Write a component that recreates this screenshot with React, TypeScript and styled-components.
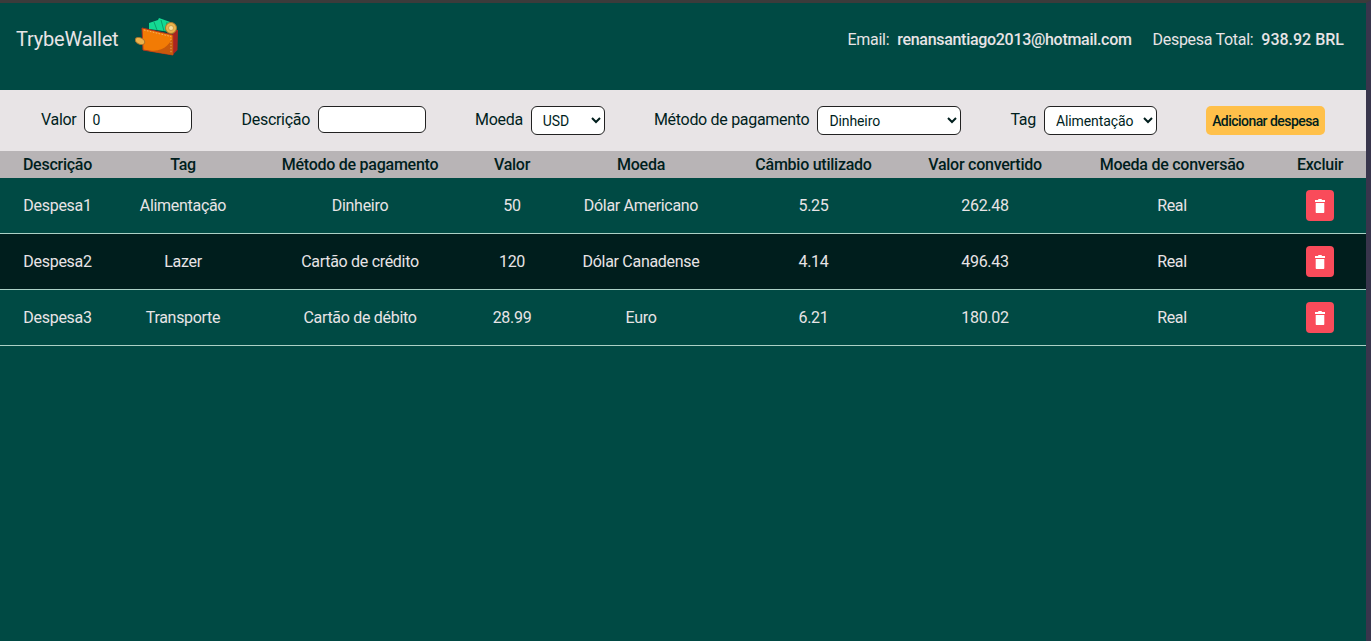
import React from 'react';
import styled, { createGlobalStyle } from 'styled-components';

const Global = createGlobalStyle`
  html, body { margin: 0; padding: 0; background: #004a44; }
  body { font-family: Roboto, "Noto Sans", sans-serif; overflow: hidden; }
`;

const Page = styled.div`
  width: 1371px;
  height: 641px;
  background: #004a44;
  border-top: 3px solid #3b3b3b;
  border-right: 5px solid #38354c;
  box-sizing: border-box;
  overflow: hidden;
`;

const Header = styled.header`
  height: 87px;
  display: flex;
  justify-content: space-between;
  align-items: flex-start;
  padding: 14px 22px 0 16px;
  box-sizing: border-box;
  color: #e8e4e6;
`;

const Brand = styled.div`
  display: flex;
  align-items: flex-start;
  gap: 17px;
`;

const BrandName = styled.span`
  font-size: 20px;
  line-height: 44px;
  letter-spacing: -0.2px;
`;

const Info = styled.div`
  display: flex;
  gap: 21px;
  padding-top: 13px;
  font-size: 16px;
  line-height: 20px;
  letter-spacing: -0.3px;
`;

const InfoItem = styled.span`
  display: flex;
  gap: 8px;
`;

const Strong = styled.strong<{ $plain?: boolean }>`
  font-weight: 500;
  letter-spacing: ${(p) => (p.$plain ? '0' : '-0.3px')};
`;

const Form = styled.form`
  height: 61px;
  background: #e8e4e6;
  display: flex;
  align-items: flex-start;
  justify-content: space-between;
  padding: 16px 41px 0;
  box-sizing: border-box;
  color: #001e1d;
  font-size: 16px;
  letter-spacing: -0.3px;
`;

const Field = styled.label`
  display: flex;
  align-items: center;
  gap: 8px;
  height: 27px;
  line-height: 20px;
`;

const TextInput = styled.input`
  width: 108px;
  height: 27px;
  box-sizing: border-box;
  border: 1px solid #222;
  border-radius: 6px;
  padding: 0 8px 0 7px;
  font: 14px Roboto, sans-serif;
  color: #001e1d;
  background: #fff;
`;

const Select = styled.select<{ $w: number }>`
  width: ${(p) => p.$w}px;
  height: 29px;
  align-self: flex-start;
  box-sizing: border-box;
  border: 1px solid #222;
  border-radius: 6px;
  padding: 0 0 0 7px;
  font: 14px Roboto, sans-serif;
  letter-spacing: -0.1px;
  color: #001e1d;
  background: #fff;
`;

const AddButton = styled.button`
  width: 119px;
  height: 29px;
  border: 0;
  padding: 0;
  border-radius: 5px;
  background: #ffc04a;
  color: #001e1d;
  white-space: nowrap;
  font: 500 14px Roboto, sans-serif;
  letter-spacing: -0.55px;
`;

const Table = styled.table`
  width: 1366px;
  border-collapse: separate;
  border-spacing: 0;
  table-layout: fixed;
  text-align: center;
`;

const HeadRow = styled.tr`
  height: 27px;
  background: #b8b4b6;
  color: #001e1d;
`;

const Th = styled.th`
  font-size: 16px;
  font-weight: 500;
  padding: 0;
  letter-spacing: -0.25px;
`;

const Row = styled.tr<{ $dark?: boolean }>`
  background: ${(p) => (p.$dark ? '#001e1d' : 'transparent')};
  color: #e8e4e6;
`;

const Td = styled.td`
  height: 56px;
  box-sizing: border-box;
  font-size: 16px;
  padding: 0;
  letter-spacing: -0.3px;
  border-bottom: 1px solid #abd1c6;
`;

const TrashButton = styled.button`
  width: 28px;
  height: 31px;
  border: 0;
  padding: 0;
  border-radius: 4px;
  background: #f94b5a;
  color: #fff;
  display: inline-flex;
  align-items: center;
  justify-content: center;
  vertical-align: middle;
`;

const Wallet = () => (
  <svg width="44" height="40" viewBox="0 0 44 40">
    <path d="M14 6l9-3 1-2 14 5-2 9-22-3z" fill="#14d993" />
    <path d="M19 5l3 8M26 3l3 11M32 5l-1 9" stroke="#0b9f6b" strokeWidth="1" fill="none" />
    <path d="M38 13h5l-.5 20-5 5z" fill="#a92420" />
    <circle cx="36" cy="11" r="5.5" fill="#e9b44c" stroke="#a8742b" />
    <circle cx="36" cy="11" r="2.5" fill="#f8dc9a" stroke="#b98532" strokeWidth="0.6" />
    <path d="M7 11l31 7v20L8 33z" fill="#f27b05" stroke="#b5341e" strokeWidth="1" />
    <path d="M14 34c13 0 20-4 24-15v19z" fill="#c8590b" />
    <path d="M9 13l27 6.5v16.500" fill="none" stroke="#f7c68a" strokeWidth="0.7" strokeDasharray="1.5 1.5" />
    <ellipse cx="5" cy="24" rx="5" ry="3.2" transform="rotate(25 5 24)" fill="#eeb24a" stroke="#a8742b" />
  </svg>
);

const TrashIcon = () => (
  <svg width="10" height="14" viewBox="0 0 10 14" fill="currentColor">
    <path d="M3.5 0h3l.5 1H10v2H0V1h3z" />
    <path d="M.7 4h8.600v9c0 .6-.4 1-1 1H1.700c-.6 0-1-.4-1-1z" />
  </svg>
);

const columns = ['Descrição', 'Tag', 'Método de pagamento', 'Valor', 'Moeda', 'Câmbio utilizado', 'Valor convertido', 'Moeda de conversão', 'Excluir'];
const widths = [115, 136, 218, 86, 172, 173, 170, 204, 92];
const rows = [
  ['Despesa1', 'Alimentação', 'Dinheiro', '50', 'Dólar Americano', '5.25', '262.48', 'Real'],
  ['Despesa2', 'Lazer', 'Cartão de crédito', '120', 'Dólar Canadense', '4.14', '496.43', 'Real'],
  ['Despesa3', 'Transporte', 'Cartão de débito', '28.99', 'Euro', '6.21', '180.02', 'Real'],
];

export default function App() {
  return (
    <Page>
      <Global />
      <Header>
        <Brand>
          <BrandName>TrybeWallet</BrandName>
          <Wallet />
        </Brand>
        <Info>
          <InfoItem>Email: <Strong>renansantiago2013@hotmail.com</Strong></InfoItem>
          <InfoItem>Despesa Total: <Strong $plain>938.92 BRL</Strong></InfoItem>
        </Info>
      </Header>
      <Form>
        <Field>Valor <TextInput defaultValue="0" /></Field>
        <Field>Descrição <TextInput /></Field>
        <Field>Moeda <Select $w={74}><option>USD</option></Select></Field>
        <Field>Método de pagamento <Select $w={144}><option>Dinheiro</option></Select></Field>
        <Field>Tag <Select $w={113}><option>Alimentação</option></Select></Field>
        <AddButton type="button">Adicionar despesa</AddButton>
      </Form>
      <Table>
        <colgroup>
          {widths.map((w, i) => <col key={i} style={{ width: w }} />)}
        </colgroup>
        <thead>
          <HeadRow>
            {columns.map((c) => <Th key={c}>{c}</Th>)}
          </HeadRow>
        </thead>
        <tbody>
          {rows.map((r, i) => (
            <Row key={r[0]} $dark={i === 1}>
              {r.map((v, j) => <Td key={j}>{v}</Td>)}
              <Td><TrashButton type="button" aria-label="Excluir"><TrashIcon /></TrashButton></Td>
            </Row>
          ))}
        </tbody>
      </Table>
    </Page>
  );
}
